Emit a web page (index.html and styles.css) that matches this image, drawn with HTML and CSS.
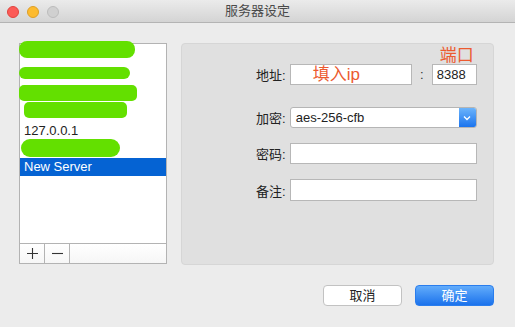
FILE: index.html
```html
<!DOCTYPE html>
<html lang="zh-CN">
<head>
<meta charset="utf-8">
<title>服务器设定</title>
<link rel="stylesheet" href="styles.css">
</head>
<body>
<div class="window">
  <div class="titlebar">
    <div class="lights">
      <span class="light red"></span>
      <span class="light yellow"></span>
      <span class="light gray"></span>
    </div>
    <div class="title">服务器设定</div>
    <div></div>
  </div>
  <div class="content">
    <div class="main">
      <div class="list">
        <div class="rows">
          <div class="row"></div>
          <div class="row"></div>
          <div class="row"></div>
          <div class="row"></div>
          <div class="row">127.0.0.1</div>
          <div class="row"></div>
          <div class="row selected">New Server</div>
        </div>
        <div class="listbar">
          <span class="lbtn"><svg width="11" height="11" viewBox="0 0 11 11"><path d="M5.5 0v11M0 5.5h11" stroke="#333" stroke-width="1.1"/></svg></span>
          <span class="lbtn"><svg width="11" height="11" viewBox="0 0 11 11"><path d="M0 5.5h11" stroke="#333" stroke-width="1.1"/></svg></span>
        </div>
        <span class="blob b1"></span>
        <span class="blob b2"></span>
        <span class="blob b3"></span>
        <span class="blob b4"></span>
        <span class="blob b5"></span>
      </div>
      <div class="panel">
        <div class="frow">
          <div class="label">地址:</div>
          <div class="addr">
            <div class="field host"><span class="hint">填入ip</span></div>
            <span class="sep">:</span>
            <div class="field port">8388<span class="note">端口</span></div>
          </div>
        </div>
        <div class="frow r2">
          <div class="label">加密:</div>
          <div class="select">
            <span class="sval">aes-256-cfb</span>
            <span class="sbtn"><svg width="8" height="6" viewBox="0 0 8 6"><path d="M1 1.5l3 3 3-3" fill="none" stroke="#fff" stroke-width="1.3"/></svg></span>
          </div>
        </div>
        <div class="frow r3">
          <div class="label">密码:</div>
          <div class="field wide"></div>
        </div>
        <div class="frow r4">
          <div class="label">备注:</div>
          <div class="field wide tall"></div>
        </div>
      </div>
    </div>
    <div class="actions">
      <button class="btn cancel">取消</button>
      <button class="btn ok">确定</button>
    </div>
  </div>
</div>
</body>
</html>
```

FILE: styles.css
```css
html, body {
  margin: 0;
  padding: 0;
}
body {
  width: 515px;
  height: 327px;
  overflow: hidden;
  background: #ececec;
  font-family: "Liberation Sans", "Noto Sans CJK SC", sans-serif;
  font-size: 13px;
  color: #222;
}
.window {
  width: 515px;
  height: 327px;
  background: #ececec;
}
.titlebar {
  height: 22px;
  border-bottom: 1px solid #b4b4b4;
  background: linear-gradient(#ebebeb, #d4d4d4);
  display: grid;
  grid-template-columns: 1fr auto 1fr;
  align-items: center;
}
.lights {
  display: flex;
  gap: 8px;
  padding-left: 7px;
  margin-top: 2px;
}
.light {
  width: 12px;
  height: 12px;
  border-radius: 50%;
  box-sizing: border-box;
}
.red { background: #fc5b57; border: 1px solid #e0443e; }
.yellow { background: #fdbb2f; border: 1px solid #de9f26; }
.gray { background: #d0d0d0; border: 1px solid #bcbcbc; }
.title {
  font-size: 13px;
  color: #4a4a4a;
  line-height: 22px;
}
.content {
  padding: 20px 21px 0 19px;
}
.main {
  display: flex;
  gap: 14px;
}
.list {
  position: relative;
  width: 148px;
  height: 221px;
  box-sizing: border-box;
  border: 1px solid #b3b3b3;
  background: #fff;
  display: flex;
  flex-direction: column;
}
.rows {
  flex: 1;
  padding-top: 6px;
}
.row {
  height: 18px;
  line-height: 18px;
  padding-left: 4px;
  font-size: 13px;
  color: #222;
}
.row.selected {
  background: #0563d3;
  color: #fff;
}
.listbar {
  height: 19px;
  border-top: 1px solid #b3b3b3;
  display: flex;
  background: linear-gradient(#fff, #f6f6f6);
}
.lbtn {
  width: 24px;
  border-right: 1px solid #b3b3b3;
  display: flex;
  align-items: center;
  justify-content: center;
}
.blob {
  position: absolute;
  background: #63e000;
}
.b1 { left: -1px; top: -3px; width: 116px; height: 17px; border-radius: 8px; }
.b2 { left: -1px; top: 23px; width: 111px; height: 12px; border-radius: 6px; }
.b3 { left: -1px; top: 41px; width: 118px; height: 16px; border-radius: 5px; }
.b4 { left: 4px; top: 58px; width: 103px; height: 16px; border-radius: 5px; }
.b5 { left: 1px; top: 95px; width: 99px; height: 18px; border-radius: 9px; }
.panel {
  width: 314px;
  height: 222px;
  box-sizing: border-box;
  border: 1px solid #d6d6d6;
  border-radius: 4px;
  background: #e0e0e0;
  padding-top: 20px;
}
.frow {
  display: flex;
  align-items: center;
  gap: 4px;
}
.r2 { margin-top: 22px; }
.r3 { margin-top: 15px; }
.r4 { margin-top: 15px; }
.label {
  width: 104px;
  text-align: right;
  font-size: 13px;
  color: #222;
}
.addr {
  display: flex;
  align-items: center;
}
.field {
  position: relative;
  height: 21px;
  box-sizing: border-box;
  border: 1px solid #b7b7b7;
  background: #fff;
  line-height: 19px;
  padding-left: 4px;
  font-size: 13px;
  color: #222;
}
.host {
  width: 122px;
  padding-left: 22px;
}
.hint {
  color: #ec5a2f;
  font-size: 17px;
}
.sep {
  width: 20px;
  text-align: center;
  color: #333;
}
.port {
  width: 45px;
}
.note {
  position: absolute;
  left: 7px;
  bottom: 100%;
  margin-bottom: 0;
  font-size: 17px;
  line-height: 18px;
  color: #ec5a2f;
}
.wide {
  width: 187px;
}
.tall {
  height: 22px;
}
.select {
  width: 187px;
  height: 21px;
  box-sizing: border-box;
  border: 1px solid #b5b5b5;
  border-radius: 3px;
  background: #fff;
  display: flex;
  overflow: hidden;
}
.sval {
  flex: 1;
  line-height: 19px;
  padding-left: 5px;
  font-size: 13px;
}
.sbtn {
  width: 17px;
  background: linear-gradient(#6cb4fb, #1b74ee);
  display: flex;
  align-items: center;
  justify-content: center;
}
.actions {
  display: flex;
  justify-content: flex-end;
  gap: 13px;
  margin-top: 20px;
}
.btn {
  width: 79px;
  height: 21px;
  border-radius: 4px;
  font-family: "Liberation Sans", "Noto Sans CJK SC", sans-serif;
  font-size: 13px;
  padding: 0;
  line-height: 19px;
}
.cancel {
  background: #fff;
  border: 1px solid #c2c2c2;
  color: #222;
}
.ok {
  background: linear-gradient(#62acfb, #1b72ec);
  border: 1px solid #2a7ded;
  color: #fff;
}
```
